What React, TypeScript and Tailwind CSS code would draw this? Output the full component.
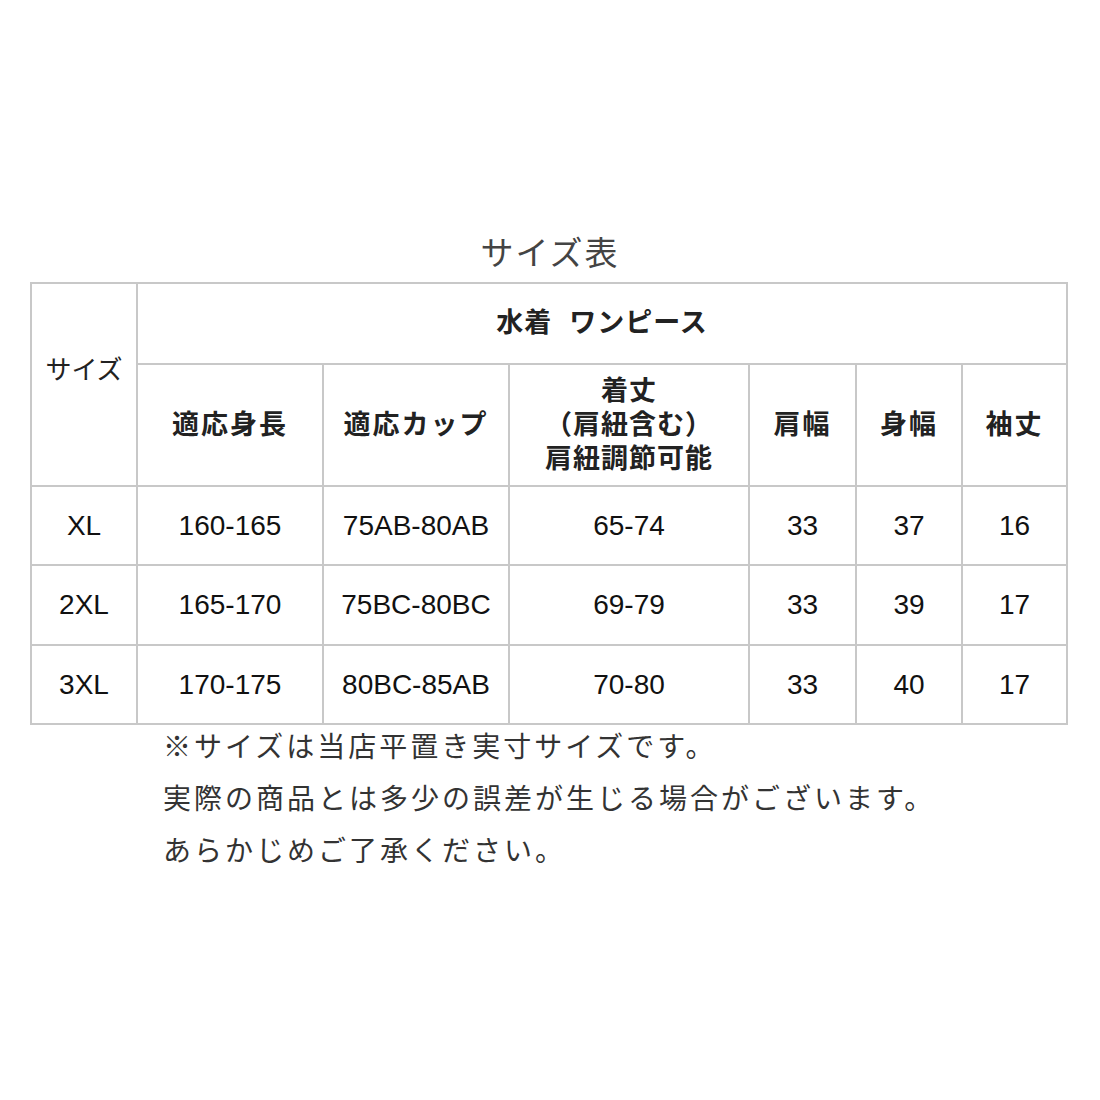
const font = { fontFamily: '"Liberation Sans", "Noto Sans CJK JP", sans-serif' };

const columns = ["適応身長", "適応カップ", "着丈", "肩幅", "身幅", "袖丈"];

const rows = [
  { size: "XL", height: "160-165", cup: "75AB-80AB", length: "65-74", shoulder: "33", body: "37", sleeve: "16" },
  { size: "2XL", height: "165-170", cup: "75BC-80BC", length: "69-79", shoulder: "33", body: "39", sleeve: "17" },
  { size: "3XL", height: "170-175", cup: "80BC-85AB", length: "70-80", shoulder: "33", body: "40", sleeve: "17" },
];

const notes = [
  "※サイズは当店平置き実寸サイズです。",
  "実際の商品とは多少の誤差が生じる場合がございます。",
  "あらかじめご了承ください。",
];

function Cell({ children, className = "" }: { children: React.ReactNode; className?: string }) {
  return <div className={`bg-white flex items-center justify-center text-center ${className}`}>{children}</div>;
}

export default function App() {
  return (
    <div className="w-[1100px] h-[1100px] bg-white text-[#111]" style={font}>
      {/* タイトル */}
      <div className="pt-[230px] text-center text-[33px] leading-[48px] text-[#444] tracking-[2px]">サイズ表</div>

      {/* 表 */}
      <div className="ml-[30px] mt-[4px] w-[1038px] grid grid-cols-[104px_184px_184px_238px_105px_104px_103px] grid-rows-[79px_120px_77px_78px_77px] gap-[2px] p-[2px] bg-[#c8c8c8]">
        <Cell className="row-span-2 text-[26px] pb-[28px] text-[#222]">サイズ</Cell>
        <Cell className="col-span-6 text-[27px] font-bold tracking-[1px] text-[#222]">水着&nbsp;&nbsp;ワンピース</Cell>
        {columns.map((c) =>
          c === "着丈" ? (
            <Cell key={c} className="flex-col text-[27px] font-bold leading-[34px] tracking-[1px] text-[#222]">
              <span>着丈</span>
              <span>（肩紐含む）</span>
              <span>肩紐調節可能</span>
            </Cell>
          ) : (
            <Cell key={c} className="text-[27px] font-bold tracking-[2px] text-[#222]">
              {c}
            </Cell>
          )
        )}
        {rows.map((r) => (
          <div key={r.size} className="contents">
            <Cell className="text-[28px]">{r.size}</Cell>
            <Cell className="text-[28px]">{r.height}</Cell>
            <Cell className="text-[28px]">{r.cup}</Cell>
            <Cell className="text-[28px]">{r.length}</Cell>
            <Cell className="text-[28px]">{r.shoulder}</Cell>
            <Cell className="text-[28px]">{r.body}</Cell>
            <Cell className="text-[28px]">{r.sleeve}</Cell>
          </div>
        ))}
      </div>

      {/* 注意書き */}
      <div className="ml-[163px] mt-[-3px] text-[28px] leading-[52px] tracking-[3px] text-[#333]">
        {notes.map((n) => (
          <p key={n}>{n}</p>
        ))}
      </div>
    </div>
  );
}
